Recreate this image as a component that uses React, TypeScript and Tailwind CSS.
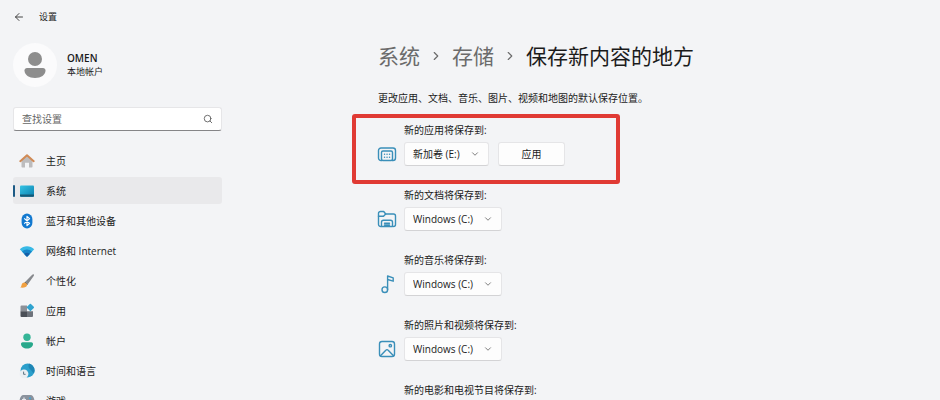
import type { ReactNode } from "react";
import { ArrowLeft, ChevronDown, ChevronRight, Search } from "lucide-react";

const HomeIcon = () => (
  <svg viewBox="0 0 16 16" className="size-4" aria-hidden>
    <path d="M2.5 7.5 8 2.8l5.5 4.7v6.2a.8.8 0 0 1-.8.8H10V9.8H6v4.7H3.3a.8.8 0 0 1-.8-.8z" fill="#bdbcbd" />
    <path d="M1.3 8.2 8 2.2l6.7 6" fill="none" stroke="#d08a55" strokeWidth="2" strokeLinecap="round" strokeLinejoin="round" />
  </svg>
);

const SystemIcon = () => (
  <svg viewBox="0 0 16 16" className="size-4" aria-hidden>
    <defs>
      <linearGradient id="screen" x1="0" y1="0" x2="1" y2="1">
        <stop offset="0" stopColor="#35c3e4" />
        <stop offset="1" stopColor="#0b7fae" />
      </linearGradient>
    </defs>
    <rect x="1" y="2.6" width="14" height="11.2" rx="1" fill="url(#screen)" />
    <path d="M1 11.6h14v1.2a1 1 0 0 1-1 1H2a1 1 0 0 1-1-1z" fill="#155a78" />
  </svg>
);

const BluetoothIcon = () => (
  <svg viewBox="0 0 16 16" className="size-4" aria-hidden>
    <rect x="2.6" y="0.6" width="10.8" height="14.8" rx="5.4" fill="#1279d0" />
    <path d="m5.2 5.4 5.4 5L8 12.6V3.4l2.6 2.2-5.4 5" fill="none" stroke="#fff" strokeWidth="1.2" strokeLinejoin="round" />
  </svg>
);

const NetworkIcon = () => (
  <svg viewBox="0 0 16 16" className="size-4" aria-hidden>
    <path d="M.8 6.3C4.7 2.2 11.3 2.2 15.2 6.3L8.7 13.2a1 1 0 0 1-1.4 0z" fill="#37b9e6" />
    <path d="M3 8.5c2.8-2.7 7.2-2.7 10 0l-4.3 4.7a1 1 0 0 1-1.4 0z" fill="#1785c9" />
    <path d="M5.2 10.900c1.600-1.400 4-1.400 5.600 0l-2.100 2.300a1 1 0 0 1-1.400 0z" fill="#155ea6" />
  </svg>
);

const BrushIcon = () => (
  <svg viewBox="0 0 16 16" className="size-4" aria-hidden>
    <path d="M14.6 1.3c.7.5.5 1.1.1 1.7L9 11 6.3 8.700l6.900-7c.4-.4.9-.7 1.400-.4z" fill="#87898d" />
    <path d="M6.3 8.700 9 11l-.8 1-2.800-2.400z" fill="#57595d" />
    <path d="M5.5 9.400c1.500.1 2.700 1.300 2.600 2.700-.2 2.300-3.400 3-7 2.500 1.300-.7 1.200-1.600 1.600-3 .4-1.400 1.500-2.300 2.800-2.200z" fill="#f1a040" />
  </svg>
);

const AppsIcon = () => (
  <svg viewBox="0 0 16 16" className="size-4" aria-hidden>
    <path d="M2.5 2.500H8v5.700H1.500V3.500a1 1 0 0 1 1-1z" fill="#8c9097" />
    <path d="M1.500 8.200H8V14H2.500a1 1 0 0 1-1-1z" fill="#4b4f57" />
    <path d="M8 8.200h6V13a1 1 0 0 1-1 1H8z" fill="#6e737b" />
    <rect x="8.600" y="1.600" width="5.600" height="5.600" rx="0.8" transform="rotate(45 11.400 4.400)" fill="#2fa3cf" />
  </svg>
);

const AccountIcon = () => (
  <svg viewBox="0 0 16 16" className="size-4" aria-hidden>
    <circle cx="8" cy="4.2" r="3.7" fill="#35b597" />
    <path d="M3.700 9.300h8.600c1 0 1.700.7 1.700 1.700 0 2.700-2.500 4.500-6 4.500s-6-1.800-6-4.500c0-1 .7-1.700 1.700-1.700z" fill="#27a88b" />
  </svg>
);

const TimeIcon = () => (
  <svg viewBox="0 0 16 16" className="size-4" aria-hidden>
    <circle cx="8.600" cy="7.400" r="7" fill="#2b9fcb" />
    <path d="M10 .6a7 7 0 0 1 5 9.500c-2-.4-2-2.600-3.600-3.600S8.800 3 10 .6z" fill="#1f86b5" />
    <circle cx="5" cy="10.800" r="4.400" fill="#e9eef2" />
    <path d="M4.600 8.600v2.700h2" fill="none" stroke="#5d7482" strokeWidth="1" />
  </svg>
);

const GameIcon = () => (
  <svg viewBox="0 0 16 16" className="size-4" aria-hidden>
    <path d="M4.500 2h7C14 2 15.500 5 15.500 9c0 2.500-.7 4-2 4-1.500 0-2-2-3.500-2H6c-1.500 0-2 2-3.500 2-1.300 0-2-1.500-2-4C.5 5 2 2 4.500 2z" fill="#8a929d" />
    <path d="M5 4.500v4M3 6.500h4" stroke="#e8ebef" strokeWidth="1.2" />
    <circle cx="11" cy="5.200" r="1" fill="#3fa7d6" />
    <circle cx="12" cy="7.700" r="1" fill="#4b525c" />
  </svg>
);

const lineProps = {
  viewBox: "0 0 20 20",
  className: "size-5",
  fill: "none",
  stroke: "#3a8fb9",
  strokeWidth: 1.4,
  strokeLinejoin: "round",
  strokeLinecap: "round",
  "aria-hidden": true,
} as const;

const AppStoreIcon = () => (
  <svg {...lineProps}>
    <path d="M5 16.500H4A2.500 2.500 0 0 1 1.500 14V6.500A2.500 2.500 0 0 1 4 4h12a2.500 2.500 0 0 1 2.500 2.500V14a2.500 2.500 0 0 1-2.500 2.500h-1" />
    <rect x="4.5" y="7" width="11" height="9.5" rx="1.5" />
    <path d="M7.500 10.300h.1M10 10.300h.1M12.500 10.300h.1M7.500 13.200h.1M10 13.200h.1M12.500 13.200h.1" />
  </svg>
);

const DocumentsIcon = () => (
  <svg {...lineProps}>
    <path d="M4 17.500a2.200 2.200 0 0 1-2.500-2.200V4.500a2 2 0 0 1 2-2h3.200l2 2.500h7.800a2 2 0 0 1 2 2v8.500a2 2 0 0 1-2 2" />
    <path d="M1.500 7.300h5l2.200-2.200" />
    <path d="M4.500 17.500v-4.200a2 2 0 0 1 2-2h7a2 2 0 0 1 2 2v4.200zM7.500 14.200h5M7.500 16h5" />
  </svg>
);

const MusicIcon = () => (
  <svg {...lineProps}>
    <circle cx="7.800" cy="15.700" r="2.800" />
    <path d="M10.600 15.700V2l5.600 1.800v3.400l-5.600-1.700" />
  </svg>
);

const PhotosIcon = () => (
  <svg {...lineProps}>
    <rect x="2.500" y="2.500" width="15" height="15" rx="2.500" />
    <circle cx="13.300" cy="6.700" r="1.200" />
    <path d="m3.500 16.700 5.300-5.500a1.600 1.600 0 0 1 2.400 0l5.300 5.500" />
  </svg>
);

const VideoIcon = () => (
  <svg {...lineProps}>
    <rect x="2" y="4" width="16" height="12" rx="2" />
    <path d="m8.500 7.500 4 2.500-4 2.500z" />
  </svg>
);

const navItems = [
  { label: "主页", icon: <HomeIcon /> },
  { label: "系统", icon: <SystemIcon />, active: true },
  { label: "蓝牙和其他设备", icon: <BluetoothIcon /> },
  { label: "网络和 Internet", icon: <NetworkIcon /> },
  { label: "个性化", icon: <BrushIcon /> },
  { label: "应用", icon: <AppsIcon /> },
  { label: "帐户", icon: <AccountIcon /> },
  { label: "时间和语言", icon: <TimeIcon /> },
  { label: "游戏", icon: <GameIcon /> },
];

type Location = {
  id: string;
  label: string;
  drive: string;
  icon: ReactNode;
  pending?: boolean;
};

const locations: Location[] = [
  { id: "apps", label: "新的应用将保存到:", drive: "新加卷 (E:)", icon: <AppStoreIcon />, pending: true },
  { id: "documents", label: "新的文档将保存到:", drive: "Windows (C:)", icon: <DocumentsIcon /> },
  { id: "music", label: "新的音乐将保存到:", drive: "Windows (C:)", icon: <MusicIcon /> },
  { id: "photos", label: "新的照片和视频将保存到:", drive: "Windows (C:)", icon: <PhotosIcon /> },
  { id: "videos", label: "新的电影和电视节目将保存到:", drive: "Windows (C:)", icon: <VideoIcon /> },
];

function Sidebar() {
  return (
    <aside className="w-[222px] shrink-0 pl-[13px]">
      <header className="flex h-[34px] items-center gap-[14px]">
        <button type="button" aria-label="返回">
          <ArrowLeft className="size-3 text-[#444]" strokeWidth={2} />
        </button>
        <span className="text-[9px] leading-4 text-[#222]">设置</span>
      </header>

      <div className="mt-[9px] flex items-center gap-[10px]">
        <span className="grid size-11 place-items-center rounded-full bg-[#fbfbfc]">
          <svg viewBox="0 0 24 28" className="h-7 w-6" fill="#8d8d8d" aria-hidden>
            <circle cx="12" cy="8" r="7" />
            <path d="M4 17h16c1.500 0 2.500 1 2.500 2.500 0 4.500-4.500 7.500-10.500 7.500S1.500 24 1.500 19.500C1.500 18 2.500 17 4 17z" />
          </svg>
        </span>
        <div className="leading-[14px] text-[#1b1b1b]">
          <p className="font-semibold">OMEN</p>
          <p className="text-[9px]">本地帐户</p>
        </div>
      </div>

      <div className="mt-5 flex h-6 items-center rounded-[3px] border border-[#e6e6e8] border-b-[#858587] bg-white pr-2 pl-2">
        <input
          type="search"
          aria-label="查找设置"
          placeholder="查找设置"
          className="min-w-0 flex-1 bg-transparent leading-4 outline-none placeholder:text-[#666]"
        />
        <Search className="size-[10px] text-[#555]" strokeWidth={2} />
      </div>

      <nav className="mt-4 flex flex-col gap-[3px]">
        {navItems.map((item) => (
          <a
            key={item.label}
            href="#"
            aria-current={item.active ? "page" : undefined}
            className={
              item.active
                ? "flex h-[27px] items-center rounded-[3px] bg-[#e9e9eb]"
                : "flex h-[27px] items-center rounded-[3px]"
            }
          >
            <span className={item.active ? "h-3 w-[2px] rounded-full bg-[#1c5a85]" : "h-3 w-[2px]"} />
            <span className="ml-1">{item.icon}</span>
            <span className="ml-[11px]">{item.label}</span>
          </a>
        ))}
      </nav>
    </aside>
  );
}

function LocationRow({ location }: { location: Location }) {
  const { id, label, drive, icon, pending } = location;
  return (
    <li className="relative h-[65px] shrink-0">
      {pending && (
        <span
          aria-hidden
          className="pointer-events-none absolute -top-2 -left-[26px] h-[70px] w-[268px] rounded-[3px] border-4 border-[#e03a34]"
        />
      )}
      <label htmlFor={id} className="ml-[26px] block leading-4">
        {label}
      </label>
      <div className="mt-1 flex items-center">
        <span className="mr-[7px] -ml-px">{icon}</span>
        <div className="relative">
          <select
            id={id}
            defaultValue={drive}
            className={
              pending
                ? "block h-6 w-[85px] appearance-none rounded-[3px] border border-[#e5e5e7] border-b-[#d3d3d5] bg-[#fdfdfd] pl-2"
                : "block h-6 w-[98px] appearance-none rounded-[3px] border border-[#e5e5e7] border-b-[#d3d3d5] bg-[#fdfdfd] pl-2"
            }
          >
            <option>{drive}</option>
          </select>
          <ChevronDown className="pointer-events-none absolute top-[7px] right-[9px] size-[10px] text-[#666]" strokeWidth={2} />
        </div>
        {pending && (
          <button
            type="button"
            className="ml-[9px] h-6 w-[67px] rounded-[3px] border border-[#e5e5e7] border-b-[#d3d3d5] bg-[#fdfdfd]"
          >
            应用
          </button>
        )}
      </div>
    </li>
  );
}

export default function App() {
  return (
    <div
      lang="zh-CN"
      className="flex h-screen overflow-hidden bg-[#f3f4f6] font-['Open_Sans','Noto_Sans_CJK_SC',sans-serif] text-[10px] leading-4 text-[#1b1b1b]"
    >
      <Sidebar />
      <main className="min-w-0 flex-1 pt-10 pr-6 pl-[156px]">
        <h1 className="flex items-center text-[21px] leading-8">
          <a href="#" className="text-[#6b6b6b]">系统</a>
          <ChevronRight className="mx-[9px] size-[14px] text-[#6b6b6b]" strokeWidth={2} />
          <a href="#" className="text-[#6b6b6b]">存储</a>
          <ChevronRight className="mx-[9px] size-[14px] text-[#6b6b6b]" strokeWidth={2} />
          <span>保存新内容的地方</span>
        </h1>
        <p className="mt-[18px]">更改应用、文档、音乐、图片、视频和地图的默认保存位置。</p>
        <ul className="mt-4 flex flex-col">
          {locations.map((location) => (
            <LocationRow key={location.id} location={location} />
          ))}
        </ul>
      </main>
    </div>
  );
}
